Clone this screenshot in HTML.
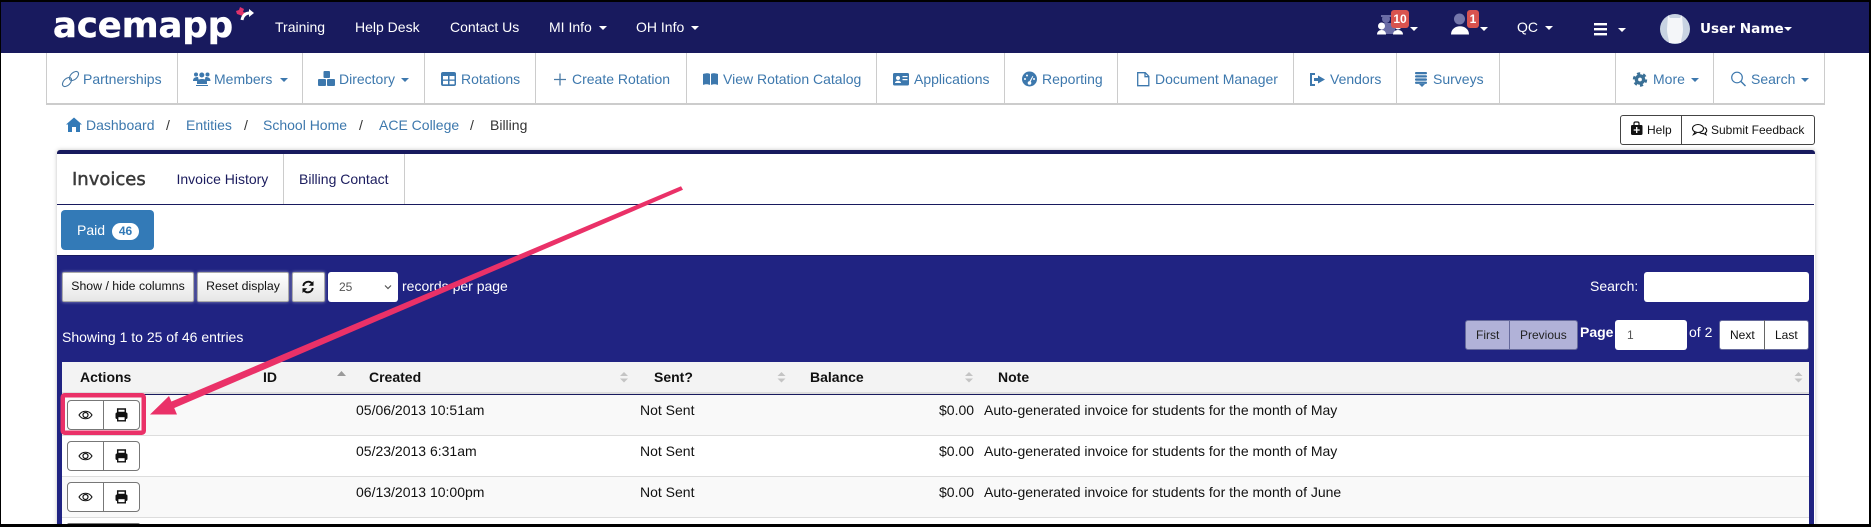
<!DOCTYPE html>
<html><head><meta charset="utf-8"><title>Billing</title>
<style>
html{margin:0;padding:0;width:1871px;height:527px;overflow:hidden;background:#fff}
body{margin:0;padding:0;background:#fff}
#p{position:relative;width:1871px;height:527px;overflow:hidden;font-family:"Liberation Sans",Arial,sans-serif;font-size:14px;color:#333}
.a{position:absolute;box-sizing:border-box}
.t{position:absolute;white-space:nowrap;line-height:20px;height:20px}
.w{color:#fff}.l{color:#3d78ad}.k{color:#111}
.s{font-size:12px}
.b{font-weight:bold}
.sep{position:absolute;width:1px;background:#ccc}
.dt{position:absolute;width:132px;height:30px;box-sizing:border-box;background:linear-gradient(#fff,#e6e6e6);border:1px solid #aaa;border-radius:2px;box-shadow:0 0 3px rgba(255,255,255,.5);color:#111;font-size:12.3px;text-align:center;line-height:27px}
.ag{position:absolute;left:67px;width:73px;height:30px;box-sizing:border-box;border:1px solid #777;border-radius:4px;background:#fff}
.ag i{position:absolute;left:35px;top:0;bottom:0;width:1px;background:#777}
.row{position:absolute;left:62px;width:1747px;box-sizing:border-box;border-bottom:1px solid #ddd}
</style></head><body><div id="p">

<!-- top bar -->
<div class="a" style="left:0;top:0;width:1871px;height:53px;background:#181a5e"></div>
<div class="t w" style="left:275px;top:17px">Training</div>
<div class="t w" style="left:355px;top:17px">Help Desk</div>
<div class="t w" style="left:450px;top:17px">Contact Us</div>
<div class="t w" style="left:549px;top:17px">MI Info</div>
<div class="t w" style="left:636px;top:17px">OH Info</div>
<div class="t w" style="left:1517px;top:17px">QC</div>
<div class="t w" style="left:1700px;top:19px;font-family:'DejaVu Sans',sans-serif;font-weight:bold;font-size:13.6px">User Name</div>

<!-- secondary nav -->
<div class="a" style="left:46px;top:53px;width:1779px;height:52px;background:#fff;border:1px solid #ccc;border-top:0;border-bottom:2px solid #ccc"></div>
<div class="sep" style="left:177px;top:53px;height:51px"></div>
<div class="sep" style="left:302px;top:53px;height:51px"></div>
<div class="sep" style="left:424px;top:53px;height:51px"></div>
<div class="sep" style="left:535px;top:53px;height:51px"></div>
<div class="sep" style="left:686px;top:53px;height:51px"></div>
<div class="sep" style="left:876px;top:53px;height:51px"></div>
<div class="sep" style="left:1004px;top:53px;height:51px"></div>
<div class="sep" style="left:1117px;top:53px;height:51px"></div>
<div class="sep" style="left:1293px;top:53px;height:51px"></div>
<div class="sep" style="left:1396px;top:53px;height:51px"></div>
<div class="sep" style="left:1499px;top:53px;height:51px"></div>
<div class="sep" style="left:1615px;top:53px;height:51px"></div>
<div class="sep" style="left:1713px;top:53px;height:51px"></div>
<div class="t l" style="left:83px;top:69px">Partnerships</div>
<div class="t l" style="left:214px;top:69px">Members</div>
<div class="t l" style="left:339px;top:69px">Directory</div>
<div class="t l" style="left:461px;top:69px">Rotations</div>
<div class="t l" style="left:572px;top:69px">Create Rotation</div>
<div class="t l" style="left:723px;top:69px">View Rotation Catalog</div>
<div class="t l" style="left:914px;top:69px">Applications</div>
<div class="t l" style="left:1042px;top:69px">Reporting</div>
<div class="t l" style="left:1155px;top:69px">Document Manager</div>
<div class="t l" style="left:1330px;top:69px">Vendors</div>
<div class="t l" style="left:1433px;top:69px">Surveys</div>
<div class="t l" style="left:1653px;top:69px">More</div>
<div class="t l" style="left:1751px;top:69px">Search</div>

<!-- breadcrumb -->
<div class="t l" style="left:86px;top:115px">Dashboard</div>
<div class="t" style="left:166px;top:115px">/</div>
<div class="t l" style="left:186px;top:115px">Entities</div>
<div class="t" style="left:244px;top:115px">/</div>
<div class="t l" style="left:263px;top:115px">School Home</div>
<div class="t" style="left:359px;top:115px">/</div>
<div class="t l" style="left:379px;top:115px">ACE College</div>
<div class="t" style="left:470px;top:115px">/</div>
<div class="t" style="left:490px;top:115px">Billing</div>

<!-- help -->
<div class="a" style="left:1620px;top:115px;width:195px;height:30px;border:1px solid #444;border-radius:3px;background:#fff"></div>
<div class="a" style="left:1681px;top:115px;width:1px;height:30px;background:#444"></div>
<div class="t s k" style="left:1647px;top:120px">Help</div>
<div class="t s k" style="left:1711px;top:120px">Submit Feedback</div>

<!-- card -->
<div class="a" style="left:57px;top:150px;width:1758px;height:377px;background:#fff;border-radius:3px 3px 0 0;box-shadow:0 0 4px rgba(0,0,0,.25)"></div>
<div class="a" style="left:57px;top:150px;width:1758px;height:4px;background:#181a5e;border-radius:3px 3px 0 0"></div>
<div class="a" style="left:57px;top:204px;width:1757px;height:1px;background:#181a5e"></div>
<div class="t" style="left:72px;top:170px;font-family:'DejaVu Sans',sans-serif;font-size:18px;color:#3a3a3a;-webkit-text-stroke:.45px #3a3a3a">Invoices</div>
<div class="t" style="left:176.500px;top:169px;color:#1b1c5e">Invoice History</div>
<div class="t" style="left:299px;top:169px;color:#1b1c5e">Billing Contact</div>
<div class="sep" style="left:283px;top:154px;height:50px"></div>
<div class="sep" style="left:404px;top:154px;height:50px"></div>
<div class="a" style="left:61px;top:210px;width:93px;height:40px;background:#337ab7;border-radius:4px"></div>
<div class="t w" style="left:77px;top:220px">Paid</div>
<div class="a" style="left:112px;top:223px;width:27px;height:17px;background:#fff;border-radius:9px;color:#337ab7;font-size:12px;font-weight:bold;text-align:center;line-height:17px">46</div>

<!-- panel -->
<div class="a" style="left:57px;top:255px;width:1757px;height:272px;background:#202382;border-top:1px solid #181a5e"></div>
<div class="dt" style="left:62px;top:272px;width:132px">Show / hide columns</div>
<div class="dt" style="left:197px;top:272px;width:92px">Reset display</div>
<div class="dt" style="left:292px;top:272px;width:33px"></div>
<div class="a" style="left:328px;top:272px;width:70px;height:30px;background:#fff;border-radius:3px"></div>
<div class="t" style="left:339px;top:277px;font-size:12px;color:#555">25</div>
<div class="t w" style="left:402px;top:276px">records per page</div>
<div class="t w" style="left:62px;top:327px">Showing 1 to 25 of 46 entries</div>
<div class="t w" style="left:1590px;top:276px">Search:</div>
<div class="a" style="left:1644px;top:272px;width:165px;height:30px;background:#fff;border-radius:3px"></div>
<div class="a" style="left:1465px;top:320px;width:113px;height:30px;background:#b1b2d8;border:1px solid #666a9c;border-radius:3px"></div>
<div class="a" style="left:1509px;top:320px;width:1px;height:30px;background:#666a9c"></div>
<div class="t s" style="left:1476px;top:325px;color:#222">First</div>
<div class="t s" style="left:1520px;top:325px;color:#222">Previous</div>
<div class="t w b" style="left:1580px;top:322px">Page</div>
<div class="a" style="left:1615px;top:320px;width:72px;height:30px;background:#fff;border-radius:3px"></div>
<div class="t s" style="left:1627px;top:325px;color:#555">1</div>
<div class="t w" style="left:1689px;top:322px">of 2</div>
<div class="a" style="left:1719px;top:320px;width:90px;height:30px;background:#fff;border:1px solid #666a9c;border-radius:3px"></div>
<div class="a" style="left:1764px;top:320px;width:1px;height:30px;background:#666"></div>
<div class="t s k" style="left:1730px;top:325px">Next</div>
<div class="t s k" style="left:1775px;top:325px">Last</div>

<!-- table -->
<div class="a" style="left:62px;top:362px;width:1747px;height:33px;background:#f3f3f3;border-bottom:1px solid #181a5e;box-shadow:inset 0 -2px 0 #ddd"></div>
<div class="t b k" style="left:80px;top:367px">Actions</div>
<div class="t b k" style="left:263px;top:367px">ID</div>
<div class="t b k" style="left:369px;top:367px">Created</div>
<div class="t b k" style="left:654px;top:367px">Sent?</div>
<div class="t b k" style="left:810px;top:367px">Balance</div>
<div class="t b k" style="left:998px;top:367px">Note</div>

<div class="row" style="top:395px;height:41px;background:#f9f9f9"></div>
<div class="row" style="top:436px;height:41px;background:#fff"></div>
<div class="row" style="top:477px;height:41px;background:#f9f9f9"></div>
<div class="row" style="top:518px;height:9px;background:#fff;border:0"></div>

<div class="ag" style="top:400px"><i></i></div>
<div class="ag" style="top:441px"><i></i></div>
<div class="ag" style="top:482px"><i></i></div>
<div class="ag" style="top:523px;height:4px"><i></i></div>

<div class="t k" style="left:356px;top:400px">05/06/2013 10:51am</div>
<div class="t k" style="left:640px;top:400px">Not Sent</div>
<div class="t k" style="left:939px;top:400px">$0.00</div>
<div class="t k" style="left:984px;top:400px">Auto-generated invoice for students for the month of May</div>
<div class="t k" style="left:356px;top:441px">05/23/2013 6:31am</div>
<div class="t k" style="left:640px;top:441px">Not Sent</div>
<div class="t k" style="left:939px;top:441px">$0.00</div>
<div class="t k" style="left:984px;top:441px">Auto-generated invoice for students for the month of May</div>
<div class="t k" style="left:356px;top:482px">06/13/2013 10:00pm</div>
<div class="t k" style="left:640px;top:482px">Not Sent</div>
<div class="t k" style="left:939px;top:482px">$0.00</div>
<div class="t k" style="left:984px;top:482px">Auto-generated invoice for students for the month of June</div>

<!-- icon / annotation layer -->
<svg class="a" style="left:0;top:0" width="1871" height="527" viewBox="0 0 1871 527">
<defs>
<g id="eye"><path d="M-6.500 0C-3.500-5 3.500-5 6.500 0C3.500 5-3.500 5-6.500 0Z" fill="none" stroke="#111" stroke-width="1.100"/><circle r="2.500" fill="none" stroke="#111" stroke-width="1.200"/></g>
<g id="pr"><path d="M-3.800-6H3.800V-2.500H-3.800Z" fill="none" stroke="#111" stroke-width="1.500"/><rect x="-6" y="-2.500" width="12" height="6.500" rx="1.500" fill="#111"/><rect x="-3.800" y="1.500" width="7.600" height="4.300" fill="#fff" stroke="#111" stroke-width="1.400"/></g>
<path id="cu" d="M0 0H8L4 4Z"/>
<g id="so"><path d="M-4 -1L0-5L4-1Z" fill="#c4c4c4"/><path d="M-4 1.500L0 5.500L4 1.500Z" fill="#c4c4c4"/></g>
</defs>

<!-- logo -->
<text x="53" y="37" font-family="'DejaVu Sans',sans-serif" font-weight="bold" font-size="35" fill="#fff" stroke="#fff" stroke-width=".5" textLength="180" lengthAdjust="spacingAndGlyphs">acemapp</text>
<path d="M240 7l4 2-1 3 4 1-2 4-5-2-3-1-1-3 3-1z" fill="#e0336b"/>
<path d="M250 13c-4 0-7 2-8 7" fill="none" stroke="#fff" stroke-width="3"/>
<path d="M249 9l5 4-5 4z" fill="#fff"/>

<!-- header carets -->
<g fill="#fff">
<use href="#cu" x="599" y="26"/><use href="#cu" x="691" y="26"/><use href="#cu" x="1545" y="26"/>
<use href="#cu" x="1618" y="28"/><use href="#cu" x="1784" y="27"/><use href="#cu" x="1410" y="27"/><use href="#cu" x="1480" y="27"/>
<rect x="1594" y="23" width="13" height="2.400"/><rect x="1594" y="28" width="13" height="2.400"/><rect x="1594" y="33" width="13" height="2.400"/>
</g>

<!-- group users icon -->
<circle cx="1386" cy="19" r="4" fill="#6a6ca6"/><path d="M1381 15h10v2h-10z" fill="#6a6ca6"/><path d="M1381 23h14v11h-14z" fill="#6a6ca6"/>
<circle cx="1381.500" cy="26" r="3.500" fill="#fff"/><path d="M1377 34.500c0-6 9-6 9 0z" fill="#fff"/>
<circle cx="1398" cy="26" r="3.500" fill="#fff"/><path d="M1393 34.500c0-6 10-6 10 0z" fill="#fff"/>
<rect x="1391" y="10" width="18" height="18" rx="3" fill="#d9534f"/>
<text x="1400" y="23" text-anchor="middle" font-family="'Liberation Sans',sans-serif" font-weight="bold" font-size="12" fill="#fff">10</text>
<!-- single user icon -->
<circle cx="1459.500" cy="19" r="5.500" fill="#7577ab"/><path d="M1451 34.500c0-11 18-11 18 0z" fill="#fff"/>
<rect x="1467" y="10" width="12" height="18" rx="3" fill="#d9534f"/>
<text x="1473" y="23" text-anchor="middle" font-family="'Liberation Sans',sans-serif" font-weight="bold" font-size="12" fill="#fff">1</text>
<!-- avatar -->
<circle cx="1675" cy="29" r="15" fill="#c8d3e2"/>
<path d="M1668 15l2 3h10l2-3 1 14c0 6-2 10-2 14h-12c0-4-2-8-2-14z" fill="#f4f6f9"/>

<!-- nav icons -->
<g fill="none" stroke="#4a7ba6" stroke-width="1.100">
<ellipse cx="67" cy="82" rx="5.500" ry="3.300" transform="rotate(-45 67 82)"/>
<ellipse cx="74" cy="76" rx="5.500" ry="3.300" transform="rotate(-45 74 76)"/>
</g>
<g fill="#3d78ad">
<circle cx="196" cy="74.500" r="2"/><circle cx="207.500" cy="74.500" r="2"/><circle cx="201.800" cy="75" r="2.500"/>
<path d="M193 81c0-3 2-4 5-4l1 4zM210.500 81c0-3-2-4-5-4l-1 4z"/><path d="M196 86v-1h12v1z"/><path d="M197 84v-2c0-2 2-3 5-3s5 1 5 3v2z"/>
<rect x="323.500" y="71" width="6.500" height="7" rx="1"/><rect x="318" y="79" width="8" height="7" rx="1"/><rect x="327" y="79" width="8" height="7" rx="1"/>
<rect x="441" y="72" width="15" height="14" rx="2"/>
<path d="M703 74c3-1 6-1 7 0v11c-2-1-5-1-7 0zM711 74c1-1 4-1 7 0v11c-2-1-5-1-7 0z"/>
<rect x="893" y="73" width="16" height="12.500" rx="1.500"/>
<circle cx="1029.500" cy="79" r="7.500"/>
<rect x="1415" y="72" width="12" height="2.300" rx="1"/><rect x="1415" y="75.200" width="12" height="2.300" rx="1"/><rect x="1415" y="78.400" width="12" height="2.300" rx="1"/><rect x="1415" y="81.600" width="12" height="2.300" rx="1"/><path d="M1419 84h6l-3 3z"/>
<path d="M1310 73h5v2h-3v9h3v2h-5zM1318 75.500l7 4-7 4v-2.500h-4v-3h4z"/>
<use href="#cu" x="280" y="78"/><use href="#cu" x="401" y="78"/><use href="#cu" x="1691" y="78"/><use href="#cu" x="1801" y="78"/>
</g>
<g fill="#fff">
<rect x="443" y="76" width="5" height="3.500"/><rect x="449.500" y="76" width="5" height="3.500"/><rect x="443" y="80.800" width="5" height="3.500"/><rect x="449.500" y="80.800" width="5" height="3.500"/>
<circle cx="898" cy="78" r="2"/><path d="M895 83c0-3 6-3 6 0z"/><rect x="902.500" y="76" width="5" height="1.200"/><rect x="902.500" y="79" width="5" height="1.200"/>
<circle cx="1029.500" cy="83" r="1.800"/><path d="M1029 82l3.500-6 .8.4-3 6z"/><circle cx="1025" cy="79" r="1"/><circle cx="1027" cy="75.500" r="1"/><circle cx="1034" cy="79" r="1"/>
</g>
<path d="M554 79.500h12M560 73.500v12" stroke="#4a7ba6" stroke-width="1.300" fill="none"/>
<path d="M1137.700 72.700h7.500l3.600 3.600v9.400h-11.100zM1145 72.700v4h3.800" fill="none" stroke="#3d78ad" stroke-width="1.300"/>
<circle cx="1640" cy="79.500" r="3.600" fill="none" stroke="#3a7096" stroke-width="3.400"/>
<circle cx="1640" cy="79.500" r="6" fill="none" stroke="#3a7096" stroke-width="2.400" stroke-dasharray="3.140 3.140"/>
<circle cx="1737" cy="77.500" r="5.300" fill="none" stroke="#3d78ad" stroke-width="1.200"/><path d="M1741 81.500l4.500 4.500" stroke="#3d78ad" stroke-width="1.400"/>

<!-- home -->
<path d="M74 117.500l8 7h-2v7.500h-4v-5h-4v5h-4v-7.500h-2z" fill="#337ab7"/>
<!-- medkit, comments -->
<path d="M1634 125v-1.500c0-1 .5-1.500 1.500-1.500h2c1 0 1.500.5 1.500 1.500v1.500" fill="none" stroke="#111" stroke-width="1.200"/>
<rect x="1631" y="125" width="11.500" height="10" rx="1.200" fill="#111"/><path d="M1636.700 127v6M1633.700 130h6" stroke="#fff" stroke-width="1.300"/>
<ellipse cx="1698" cy="128.500" rx="5.500" ry="4" fill="none" stroke="#111" stroke-width="1.100"/>
<path d="M1704.500 127.500c2.500 1 3 4 .8 5.300l.7 2-2.500-1.300c-1.500.2-3 0-4-1M1695 132l-1.500 2.500 3-1.500" fill="none" stroke="#111" stroke-width="1.100"/>
<!-- refresh -->
<g fill="none" stroke="#111" stroke-width="1.900"><path d="M303.300 286a5 5 0 0 1 8.700-2.600"/><path d="M312.700 288a5 5 0 0 1-8.700 2.600"/></g>
<path d="M313.500 281v4.800h-4.800zM302.500 293v-4.800h4.800z" fill="#111"/>
<!-- select chevron -->
<path d="M385 285.500l3 3 3-3" fill="none" stroke="#555" stroke-width="1.200"/>
<!-- sort -->
<path d="M337 376l4.500-5 4.500 5z" fill="#9a9a9a"/>
<use href="#so" x="624" y="377"/><use href="#so" x="781.500" y="377"/><use href="#so" x="969" y="377"/><use href="#so" x="1798.500" y="377"/>
<!-- action icons -->
<use href="#eye" x="85.500" y="415"/><use href="#pr" x="121.500" y="415"/>
<use href="#eye" x="85.500" y="456"/><use href="#pr" x="121.500" y="456"/>
<use href="#eye" x="85.500" y="497"/><use href="#pr" x="121.500" y="497"/>

<!-- annotation -->
<rect x="62.750" y="395.250" width="81" height="37.500" rx="2" fill="none" stroke="#ea3168" stroke-width="4.500"/>
<path d="M681 186.200L683 189.800L172 409L168 403Z" fill="#ea3168"/>
<path d="M150 414.500L169 396L177 414.500Z" fill="#ea3168"/>
</svg>

<!-- screenshot frame -->
<div class="a" style="left:0;top:0;width:1871px;height:2px;background:#000"></div>
<div class="a" style="left:0;top:524px;width:1871px;height:3px;background:#000"></div>
<div class="a" style="left:0;top:0;width:1px;height:527px;background:#000"></div>
<div class="a" style="left:1869px;top:0;width:2px;height:527px;background:#000"></div>
</div></body></html>
